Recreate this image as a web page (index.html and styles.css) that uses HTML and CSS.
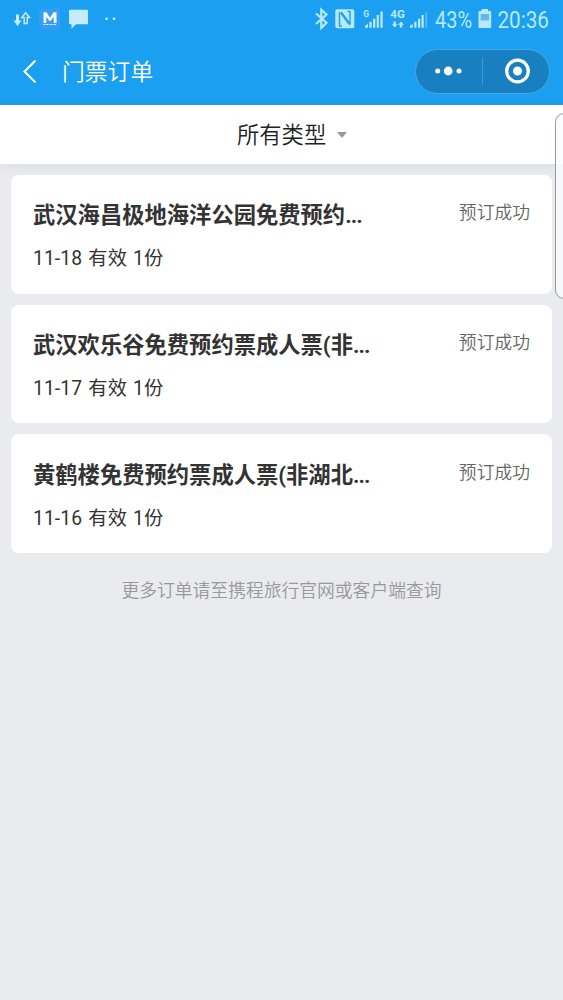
FILE: index.html
```html
<!DOCTYPE html>
<html lang="zh-CN">
<head>
<meta charset="utf-8">
<title>门票订单</title>
<link rel="stylesheet" href="styles.css">
</head>
<body>
<header class="top">
  <div class="status">
    <svg class="status-icons" width="130" height="38" viewBox="0 0 130 38" fill="#c5ebff">
      <path d="M16 14.500h3v6h2.600L17.500 26l-4.100-5.500H16z"/>
      <path d="M25.700 12.800l-3.800 4.700h2.300v6h3v-6h2.300z" fill="none" stroke="#c5ebff" stroke-width="1.500"/>
      <rect x="39" y="8.500" width="21" height="21" rx="4" fill="#379cf5"/>
      <path d="M43.500 23V12.300h3l3.500 5.500 3.500-5.500h3V23h-2.800v-6.200L50.600 21h-1.200l-3.100-4.200V23z" fill="#f3fcff"/>
      <path d="M43.500 24.500h13" stroke="#dff4ff" stroke-width="1" stroke-dasharray="2 .6"/>
      <path d="M70 9.800h17a1 1 0 0 1 1 1v12.400a1 1 0 0 1-1 1H76l-4.500 4.600v-4.600H70a1 1 0 0 1-1-1V10.800a1 1 0 0 1 1-1z"/>
      <circle cx="106.500" cy="18.800" r="1.400"/><circle cx="114" cy="18.800" r="1.400"/>
    </svg>
    <div class="status-right">
      <svg class="signal" width="120" height="38" viewBox="310 0 120 38" fill="#b9e9ff">
        <path d="M316 13.500l10.500 9.300-5.200 5V9.800l5.200 4.700L316 24" fill="none" stroke="#b9e9ff" stroke-width="2.200"/>
        <rect x="335.300" y="9.200" width="19" height="19" rx="2"/>
        <path d="M339.500 12v14h2.500M347.500 11.500h2.500v13.500" fill="none" stroke="#1b9ff0" stroke-width="1.400"/>
        <path d="M341 12.500l8.500 11.500" fill="none" stroke="#1b9ff0" stroke-width="2.200"/>
        <text class="net" x="363.200" y="17.300" font-size="8.500">G</text>
        <path d="M365 27.800v-2l3-2v4zM369.300 27.800v-6h2.300v6zM373 27.800v-9h2.300v9zM376.700 27.800V15h2.200v12.800zM380.400 27.800V11.500h2.300v16.300z"/>
        <text class="net" x="390.300" y="18" font-size="11.500" textLength="14.500" lengthAdjust="spacingAndGlyphs">4G</text>
        <path d="M393.500 21.500h2.400v2.700h1.800l-3 3.300-3-3.300h1.800zM399.800 27.500h2.400v-2.700h1.800l-3-3.300-3 3.300h1.800z"/>
        <path d="M410 27.800v-2l2.700-2v4zM414.300 27.800v-6h2.200v6zM418 27.800v-9h2.200v9zM421.500 27.800V15h2.200v12.800z"/>
        <path d="M425.300 27.800V11.500h1.900v16.300z" opacity=".35"/>
      </svg>
      <svg class="readings" width="133" height="38" viewBox="430 0 133 38" fill="#b9e9ff">
        <text class="num" x="435" y="27.800" textLength="37" lengthAdjust="spacingAndGlyphs">43%</text>
        <path d="M481.500 9h6.500v2h2.200a1 1 0 0 1 1 1v15a1 1 0 0 1-1 1h-10.700a1 1 0 0 1-1-1V12a1 1 0 0 1 1-1h2z"/>
        <path d="M480.700 14h8.300v6.500h-8.300z" fill="#62b6e8"/>
        <text class="num" x="497.500" y="27.800" textLength="51.500" lengthAdjust="spacingAndGlyphs">20:36</text>
      </svg>
    </div>
  </div>
  <div class="nav">
    <svg class="back" width="16" height="26" viewBox="0 0 16 26"><path d="M14.500 1.500L3.500 12.500l11 11" fill="none" stroke="#fff" stroke-width="2"/></svg>
    <h1 class="nav-title">门票订单</h1>
    <div class="capsule">
      <svg width="66" height="43" viewBox="0 0 66 43" fill="#fff"><circle cx="21.700" cy="21" r="2.500"/><circle cx="32.200" cy="21" r="4.400"/><circle cx="43" cy="21" r="2.500"/></svg>
      <span class="capsule-line"></span>
      <svg width="66" height="43" viewBox="0 0 66 43"><circle cx="34.500" cy="21" r="10.800" fill="none" stroke="#fff" stroke-width="3.300"/><circle cx="34.500" cy="21" r="4.500" fill="#fff"/></svg>
    </div>
  </div>
</header>
<div class="filter"><span class="filter-name">所有类型</span><i class="caret"></i></div>
<main class="orders">
  <article class="card">
    <div class="row"><h2 class="name">武汉海昌极地海洋公园免费预约<span class="dots">...</span></h2><span class="state">预订成功</span></div>
    <p class="info">11-18 有效 1份</p>
  </article>
  <article class="card">
    <div class="row"><h2 class="name">武汉欢乐谷免费预约票成人票(非<span class="dots">...</span></h2><span class="state">预订成功</span></div>
    <p class="info">11-17 有效 1份</p>
  </article>
  <article class="card">
    <div class="row"><h2 class="name">黄鹤楼免费预约票成人票(非湖北<span class="dots">...</span></h2><span class="state">预订成功</span></div>
    <p class="info">11-16 有效 1份</p>
  </article>
  <p class="more">更多订单请至携程旅行官网或客户端查询</p>
</main>
<div class="edge-handle"></div>
</body>
</html>
```
FILE: styles.css
```css
* { box-sizing: border-box; }
body {
  margin: 0;
  position: relative;
  height: 1000px;
  overflow: hidden;
  background: #e9ebef;
  color: #333;
  font-family: Roboto, "Noto Sans CJK SC", sans-serif;
}
h1, h2, p { margin: 0; }
svg { display: block; flex: none; }
.top {
  height: 105px;
  background: #1b9ff0;
  border-bottom: 1px solid #3a9bd9;
}
.status { display: flex; justify-content: space-between; height: 38px; }
.status-right { display: flex; }
.net { font-family: Roboto, sans-serif; font-weight: 700; }
.num { font-family: Roboto, sans-serif; font-size: 24.500px; }
.nav { display: flex; align-items: center; height: 67px; padding: 0 13px 0 21px; }
.nav-title {
  margin-left: 25px;
  padding-top: 2px;
  color: #fff;
  font-size: 22.800px;
  font-weight: 350;
  line-height: 34px;
}
.capsule {
  display: flex;
  align-items: center;
  width: 135px;
  height: 45px;
  margin-left: auto;
  border: 1px solid #45a9e2;
  border-radius: 23px;
  background: #187fc0;
}
.capsule-line { width: 1px; height: 27px; background: #4599cd; }
.filter {
  display: flex;
  align-items: center;
  height: 59px;
  padding-left: 237px;
  background: #fff;
  box-shadow: 0 2px 12px rgba(0, 0, 0, .07);
  color: #222;
  font-size: 22.300px;
  font-weight: 350;
}
.filter-name { padding-bottom: 4px; }
.caret {
  margin: 1px 0 0 11px;
  border: 5px solid transparent;
  border-top: 6px solid #999;
  border-bottom: 0;
}
.orders { padding: 11px 11px 0; }
.card {
  height: 118.700px;
  margin-bottom: 11px;
  padding: 22.400px 22px 0;
  border-radius: 8px;
  background: #fff;
}
.row { display: flex; justify-content: space-between; }
.name { font-size: 22.300px; font-weight: 700; line-height: 37px; white-space: nowrap; }
.dots { letter-spacing: -.900px; }
.state { color: #666; font-size: 17.800px; font-weight: 350; line-height: 32px; }
.info {
  margin-top: 9px;
  font-size: 19.300px;
  font-weight: 400;
  line-height: 32px;
  letter-spacing: .100px;
  word-spacing: 1.200px;
}
.more {
  padding-top: 12px;
  color: #999;
  font-size: 17.800px;
  font-weight: 350;
  line-height: 30px;
  text-align: center;
}
.edge-handle {
  position: absolute;
  top: 113px;
  right: -12px;
  width: 20px;
  height: 186px;
  border: 1px solid #999;
  border-radius: 9px;
  background: rgba(250, 251, 255, .8);
}
```
